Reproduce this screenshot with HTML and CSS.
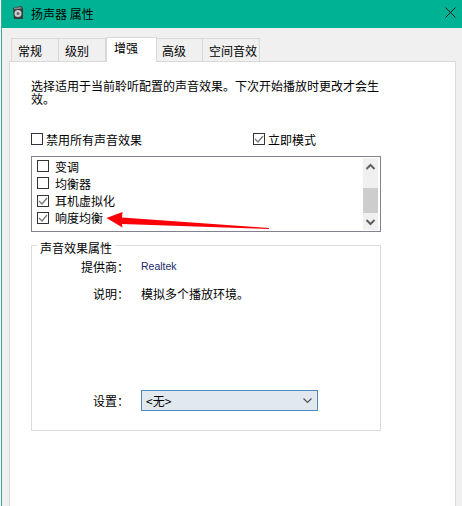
FILE: index.html
```html
<!DOCTYPE html>
<html lang="zh-CN">

<head>
    <meta charset="UTF-8">
    <title>扬声器 属性</title>
    <link rel="stylesheet" href="styles.css">
</head>

<body>
    <div class="window">
        <div class="titlebar">
            <svg class="app-icon" width="14" height="14" viewBox="0 0 14 14">
                <path d="M2 2 L10 0 L12 2 L12 13 L3 13 Z" fill="#3b3b3b" />
                <path d="M3 2 L10 1 L11 2.500 L3.500 3.500 Z" fill="#8a8a8a" />
                <circle cx="7" cy="7.500" r="3.500" fill="#cfcfcf" />
                <circle cx="7" cy="7.500" r="1.500" fill="#6a6a6a" />
            </svg>
            <span class="title">扬声器 属性</span>
            <svg class="close-icon" width="11" height="11" viewBox="0 0 11 11">
                <path d="M0.500 0.500 L10.500 10.500 M10.500 0.500 L0.500 10.500" stroke="#1b1b1b" stroke-width="1" fill="none" />
            </svg>
        </div>

        <div class="tabs">
            <div class="tab">常规</div>
            <div class="tab">级别</div>
            <div class="tab active">增强</div>
            <div class="tab">高级</div>
            <div class="tab">空间音效</div>
        </div>

        <div class="panel">
            <p class="desc">选择适用于当前聆听配置的声音效果。下次开始播放时更改才会生效。</p>

            <div class="options">
                <label class="check"><span class="box"></span>禁用所有声音效果</label>
                <label class="check"><span class="box"><svg width="10" height="10" viewBox="0 0 10 10"><path d="M1 5 L4 8 L9 2" stroke="#777" stroke-width="1.300" fill="none" /></svg></span>立即模式</label>
            </div>

            <div class="listbox">
                <div class="items">
                    <label class="check"><span class="box"></span>变调</label>
                    <label class="check"><span class="box"></span>均衡器</label>
                    <label class="check"><span class="box"><svg width="10" height="10" viewBox="0 0 10 10"><path d="M1 5 L4 8 L9 2" stroke="#777" stroke-width="1.300" fill="none" /></svg></span>耳机虚拟化</label>
                    <label class="check"><span class="box"><svg width="10" height="10" viewBox="0 0 10 10"><path d="M1 5 L4 8 L9 2" stroke="#777" stroke-width="1.300" fill="none" /></svg></span>响度均衡</label>
                </div>
                <div class="scrollbar">
                    <svg class="arrow-btn" width="15" height="16" viewBox="0 0 15 16"><path d="M3.500 11 L7.500 7 L11.500 11" stroke="#606060" stroke-width="2" fill="none" /></svg>
                    <div class="thumb"></div>
                    <svg class="arrow-btn down" width="15" height="16" viewBox="0 0 15 16"><path d="M3.500 6 L7.500 10 L11.500 6" stroke="#606060" stroke-width="2" fill="none" /></svg>
                </div>
            </div>

            <fieldset class="props">
                <legend>声音效果属性</legend>
                <div class="prop provider">
                    <span class="prop-label">提供商：</span>
                    <span class="realtek">Realtek</span>
                </div>
                <div class="prop info">
                    <span class="prop-label">说明：</span>
                    <span>模拟多个播放环境。</span>
                </div>
                <div class="prop setting">
                    <span class="prop-label">设置：</span>
                    <div class="select">
                        <span>&lt;无&gt;</span>
                        <svg width="9" height="6" viewBox="0 0 9 6"><path d="M0.500 0.500 L4.500 4.500 L8.500 0.500" stroke="#555" stroke-width="1.200" fill="none" /></svg>
                    </div>
                </div>
            </fieldset>
        </div>

        <!-- red arrow drawn over the screenshot -->
        <svg class="red-arrow" width="462" height="506" viewBox="0 0 462 506">
            <path d="M106.500 218 L122.500 212 L122 217.500 L269 228 L269 229 L122 224 L122.500 227.500 Z" fill="#fb0007" />
        </svg>
    </div>
</body>

</html>
```

FILE: styles.css
```css
* {
    margin: 0;
    padding: 0;
    box-sizing: border-box;
}

body {
    background-color: #fff;
    font-family: "Noto Sans CJK SC", "Liberation Sans", sans-serif;
    font-size: 12px;
    line-height: 13px;
    color: #000;
    padding-left: 1px;
    overflow: hidden;
}

.window {
    position: relative;
    width: 461px;
    height: 506px;
    background-color: #f0f0f0;
    border-left: 1px solid #2fae97;
    overflow: hidden;
}

.titlebar {
    height: 28px;
    margin-left: -1px;
    padding: 0 6px 2px 10px;
    display: flex;
    align-items: center;
    background-color: #00b294;
}

.app-icon {
    margin-right: 6px;
}

.title {
    flex: 1;
}

.close-icon {
    margin-bottom: 2px;
}

.tabs {
    display: flex;
    align-items: flex-end;
    height: 33px;
    padding-left: 9px;
}

.tab {
    height: 23px;
    padding-left: 6px;
    display: flex;
    align-items: center;
    border: 1px solid #d9d9d9;
    border-bottom: none;
    border-left: none;
}

.tab:nth-child(1) {
    width: 48px;
    border-left: 1px solid #d9d9d9;
}

.tab:nth-child(2) {
    width: 47px;
}

.tab:nth-child(4) {
    width: 46px;
    padding-left: 5px;
}

.tab:nth-child(5) {
    width: 57px;
}

.tab.active {
    position: relative;
    width: 51px;
    height: 25px;
    margin-bottom: -1px;
    padding: 0 0 5px 7px;
    background-color: #fff;
    border-left: 1px solid #d9d9d9;
    z-index: 1;
}

.panel {
    width: 447px;
    height: 446px;
    margin-left: 7px;
    padding: 17px 0 0 21px;
    background-color: #fff;
    border: 1px solid #d9d9d9;
    border-bottom: none;
}

.desc {
    width: 350px;
}

.options {
    display: flex;
    margin-top: 28px;
}

.options .check:first-child {
    width: 222px;
}

.check {
    display: flex;
    align-items: center;
    gap: 3px;
    height: 12px;
}

.box {
    width: 12px;
    height: 12px;
    flex: none;
    display: flex;
    align-items: center;
    justify-content: center;
    border: 1px solid #333;
    background-color: #fff;
}

.listbox {
    display: flex;
    justify-content: space-between;
    width: 350px;
    height: 76px;
    margin-top: 11px;
    padding: 1px 2px 1px 5px;
    border: 1px solid #82838f;
}

.items {
    display: flex;
    flex-direction: column;
    gap: 5.300px;
    padding-top: 2px;
}

.items .check {
    gap: 6px;
}

.scrollbar {
    width: 15px;
    display: flex;
    flex-direction: column;
    background-color: #f0f0f0;
}

.arrow-btn {
    display: block;
    flex: none;
}

.arrow-btn.down {
    margin-top: auto;
}

.thumb {
    height: 25px;
    margin-top: 14px;
    background-color: #cdcdcd;
}

.props {
    width: 350px;
    height: 194px;
    margin-top: 5px;
    border: 1px solid #dcdcdc;
}

.props legend {
    margin-left: 5px;
    padding: 4px 3px 0;
}

.prop {
    display: flex;
    align-items: center;
}

.prop-label {
    width: 97px;
    margin-right: 12px;
    text-align: right;
    flex: none;
}

.provider {
    margin-top: 6px;
}

.realtek {
    font-family: "Liberation Sans", sans-serif;
    font-size: 10.500px;
    color: #1c2a6b;
}

.info {
    margin-top: 14px;
}

.setting {
    margin-top: 90px;
}

.select {
    width: 177px;
    height: 21px;
    padding: 0 5px 0 4px;
    display: flex;
    align-items: center;
    justify-content: space-between;
    background-color: #e1e8ee;
    border: 1px solid #4d8ac0;
}

.red-arrow {
    position: absolute;
    left: -2px;
    top: 0;
    pointer-events: none;
}
```
